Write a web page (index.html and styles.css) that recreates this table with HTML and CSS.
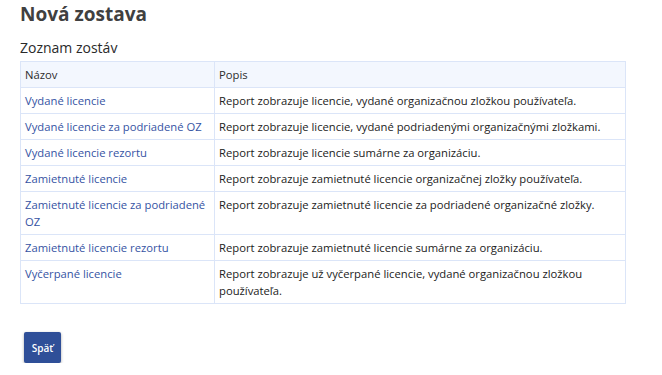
FILE: index.html
```html
<!DOCTYPE html>
<html lang="sk">
<head>
<meta charset="utf-8">
<title>Nová zostava</title>
<link rel="stylesheet" href="styles.css">
</head>
<body>
<main class="page">
  <h1 class="title">Nová zostava</h1>
  <h2 class="subtitle">Zoznam zostáv</h2>
  <table class="reports">
    <colgroup><col class="c-name"><col class="c-desc"></colgroup>
    <thead>
      <tr><th>Názov</th><th>Popis</th></tr>
    </thead>
    <tbody>
      <tr><td><a href="#">Vydané licencie</a></td><td>Report zobrazuje licencie, vydané organizačnou zložkou používateľa.</td></tr>
      <tr><td><a href="#">Vydané licencie za podriadené OZ</a></td><td>Report zobrazuje licencie, vydané podriadenými organizačnými zložkami.</td></tr>
      <tr><td><a href="#">Vydané licencie rezortu</a></td><td>Report zobrazuje licencie sumárne za organizáciu.</td></tr>
      <tr><td><a href="#">Zamietnuté licencie</a></td><td>Report zobrazuje zamietnuté licencie organizačnej zložky používateľa.</td></tr>
      <tr><td><a href="#">Zamietnuté licencie za podriadené OZ</a></td><td>Report zobrazuje zamietnuté licencie za podriadené organizačné zložky.</td></tr>
      <tr><td><a href="#">Zamietnuté licencie rezortu</a></td><td>Report zobrazuje zamietnuté licencie sumárne za organizáciu.</td></tr>
      <tr><td><a href="#">Vyčerpané licencie</a></td><td>Report zobrazuje už vyčerpané licencie, vydané organizačnou zložkou používateľa.</td></tr>
    </tbody>
  </table>
  <div class="actions">
    <button class="btn" type="button">Späť</button>
  </div>
</main>
</body>
</html>
```

FILE: styles.css
```css
html, body {
  margin: 0;
  padding: 0;
  background: #ffffff;
}
body {
  font-family: "Open Sans", "Noto Sans", sans-serif;
  color: #222222;
}
.page {
  padding: 1px 37px 0 20px;
}
.title {
  margin: 0;
  font-size: 19px;
  line-height: 27px;
  font-weight: 700;
  color: #404040;
}
.subtitle {
  margin: 10px 0 3px;
  font-size: 14px;
  line-height: 20px;
  font-weight: 400;
  color: #2a2a2a;
}
.reports {
  width: 606px;
  border-collapse: collapse;
  table-layout: fixed;
  font-size: 11.25px;
  line-height: 17px;
  border: 1px solid #dbe5f8;
}
.c-name { width: 194px; }
.reports th,
.reports td {
  border: 1px solid #dbe5f8;
  padding: 4px 4px;
  text-align: left;
  vertical-align: top;
  font-weight: 400;
}
.reports th {
  background: #f3f7fe;
  color: #2d2d2d;
}
.reports td {
  color: #222222;
}
.reports a {
  color: #3553a3;
  text-decoration: none;
}
.actions {
  padding: 28px 0 0 4px;
}
.btn {
  font-family: "Open Sans", "Noto Sans", sans-serif;
  font-size: 10px;
  font-weight: 600;
  color: #ffffff;
  background: #2f4f98;
  border: none;
  border-radius: 2px;
  width: 37px;
  height: 31px;
  padding: 0;
  box-shadow: 0 1px 3px rgba(0, 0, 0, 0.35);
}
```
